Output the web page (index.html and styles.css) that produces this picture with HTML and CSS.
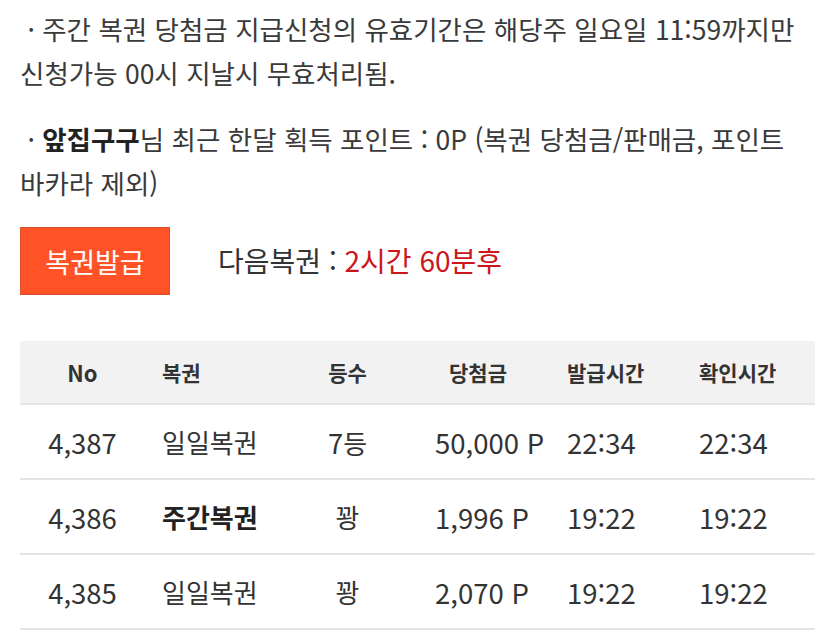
FILE: index.html
```html
<!DOCTYPE html>
<html lang="ko">
<head>
<meta charset="utf-8">
<title>복권</title>
<link rel="stylesheet" href="styles.css">
</head>
<body>
<div class="page">
  <p class="note">&nbsp;· 주간 복권 당첨금 지급신청의 유효기간은 해당주 일요일 11:59까지만 신청가능 00시 지날시 무효처리됨.</p>
  <p class="note">&nbsp;· <b>앞집구구</b>님 최근 한달 획득 포인트 : 0P (복권 당첨금/판매금, 포인트 바카라 제외)</p>
  <div class="issue">
    <button class="btn">복권발급</button>
    <div class="next">다음복권 : <span class="red">2시간 60분후</span></div>
  </div>
  <div class="table">
    <div class="row head">
      <div class="c1">No</div>
      <div class="c2">복권</div>
      <div class="c3">등수</div>
      <div class="c4">당첨금</div>
      <div class="c5">발급시간</div>
      <div class="c6">확인시간</div>
    </div>
    <div class="row">
      <div class="c1 num">4,387</div>
      <div class="c2">일일복권</div>
      <div class="c3"><span class="num">7</span>등</div>
      <div class="c4 num">50,000 P</div>
      <div class="c5 num">22:34</div>
      <div class="c6 num">22:34</div>
    </div>
    <div class="row">
      <div class="c1 num">4,386</div>
      <div class="c2 strong">주간복권</div>
      <div class="c3">꽝</div>
      <div class="c4 num">1,996 P</div>
      <div class="c5 num">19:22</div>
      <div class="c6 num">19:22</div>
    </div>
    <div class="row">
      <div class="c1 num">4,385</div>
      <div class="c2">일일복권</div>
      <div class="c3">꽝</div>
      <div class="c4 num">2,070 P</div>
      <div class="c5 num">19:22</div>
      <div class="c6 num">19:22</div>
    </div>
  </div>
</div>
</body>
</html>
```
FILE: styles.css
```css
html, body {
  margin: 0;
  padding: 0;
  background: #ffffff;
}
body {
  font-family: "Noto Sans CJK KR", "Noto Sans", sans-serif;
  color: #333333;
}
.page {
  padding: 7px 20px 0 20px;
}
.note {
  margin: 0 0 22px 0;
  font-size: 26.5px;
  line-height: 44px;
  color: #3a3a3a;
}
.note b {
  font-weight: 700;
  color: #222222;
}
.issue {
  display: flex;
  align-items: center;
  gap: 48px;
  margin-top: 21px;
}
.btn {
  width: 150px;
  height: 68px;
  background: #ff5227;
  border: 1px solid #d9502c;
  color: #ffffff;
  font-family: "Noto Sans CJK KR", sans-serif;
  font-size: 27px;
  padding: 0;
  margin: 0;
}
.next {
  font-size: 28px;
  color: #333333;
  padding-bottom: 2px;
}
.red {
  color: #cc161c;
}
.table {
  margin-top: 46px;
}
.row {
  display: grid;
  grid-template-columns: 125px 155px 95px 160px 135px 125px;
  align-items: center;
  height: 73px;
  border-bottom: 2px solid #e4e4e4;
  font-size: 26px;
  color: #333333;
}
.row.head {
  height: 62px;
  background: #f2f2f2;
  font-size: 21px;
  font-weight: 700;
  color: #333333;
}
.head .c1 {
  font-size: 22px;
}
.c1 { text-align: center; }
.c2 { padding-left: 17px; }
.c3 { text-align: center; }
.c4 { padding-left: 40px; }
.head .c4 { padding-left: 54px; }
.c5 { padding-left: 12px; }
.c6 { padding-left: 9px; }
.num {
  font-size: 27.5px;
}
.strong {
  font-weight: 700;
  color: #222222;
}
```
